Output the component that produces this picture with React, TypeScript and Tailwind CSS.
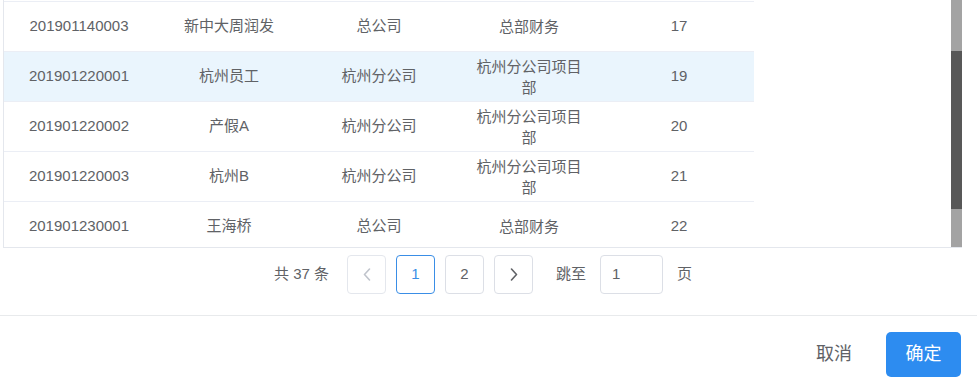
import React from 'react'

type Row = {
  code: string
  name: string
  company: string
  dept: string
  no: number
}

const rows: Row[] = [
  { code: '201901140003', name: '新中大周润发', company: '总公司', dept: '总部财务', no: 17 },
  { code: '201901220001', name: '杭州员工', company: '杭州分公司', dept: '杭州分公司项目部', no: 19 },
  { code: '201901220002', name: '产假A', company: '杭州分公司', dept: '杭州分公司项目部', no: 20 },
  { code: '201901220003', name: '杭州B', company: '杭州分公司', dept: '杭州分公司项目部', no: 21 },
  { code: '201901230001', name: '王海桥', company: '总公司', dept: '总部财务', no: 22 },
]

// index of the highlighted (current) row
const CURRENT = 1

function Chevron({ dir, disabled }: { dir: 'left' | 'right'; disabled?: boolean }) {
  return (
    <svg
      width="8"
      height="13"
      viewBox="0 0 8 13"
      fill="none"
      stroke={disabled ? '#c0c4cc' : '#606266'}
      strokeWidth="1.6"
      strokeLinecap="round"
      strokeLinejoin="round"
    >
      {dir === 'left' ? <path d="M6.5 1 1.5 6.5 6.5 12" /> : <path d="M1.5 1 6.5 6.5 1.5 12" />}
    </svg>
  )
}

function Cell({ children }: { children: React.ReactNode }) {
  return <div className="flex w-[150px] items-center justify-center text-center">{children}</div>
}

export default function App() {
  return (
    <div className="relative h-[388px] w-[977px] overflow-hidden bg-white font-['Liberation_Sans','Noto_Sans_CJK_SC',sans-serif] text-[15px] text-[#606266]">
      {/* ── Table body (scrolled) ───────────────── */}
      <div className="ml-[3px] flex h-[248px] w-[959px] overflow-hidden border-b border-l border-[#e4e7ed]">
        <div className="w-[750px] shrink-0">
          <div className="h-px" />
          <div className="h-px bg-[#ebeef5]" />
          {rows.map((r, i) => (
            <div
              key={r.code}
              className={
                i === CURRENT
                  ? 'flex h-[50px] border-b border-[#ebeef5] bg-[#eaf5fd]'
                  : 'flex h-[50px] border-b border-[#ebeef5]'
              }
            >
              <Cell>{r.code}</Cell>
              <Cell>{r.name}</Cell>
              <Cell>{r.company}</Cell>
              <Cell>
                <div className="w-[110px] leading-[21px]">{r.dept}</div>
              </Cell>
              <Cell>{r.no}</Cell>
            </div>
          ))}
        </div>
        <div className="flex-1" />
        {/* native-looking scrollbar */}
        <div className="flex w-[11px] shrink-0 flex-col bg-[#a3a3a3]">
          <div className="h-[51px]" />
          <div className="h-[158px] bg-[#585858]" />
        </div>
      </div>

      {/* ── Pagination ───────────────── */}
      <div className="mt-[7px] flex h-[39px] items-center pl-[274px]">
        <span className="whitespace-pre">共 37 条</span>
        <button className="ml-[18px] flex h-[39px] w-[39px] items-center justify-center rounded-[4px] border border-[#e4e7ed] bg-white">
          <Chevron dir="left" disabled />
        </button>
        <button className="ml-[10px] flex h-[39px] w-[39px] items-center justify-center rounded-[4px] border border-[#3a8ee6] bg-white text-[#3a8ee6]">
          1
        </button>
        <button className="ml-[10px] flex h-[39px] w-[39px] items-center justify-center rounded-[4px] border border-[#dcdfe6] bg-white">
          2
        </button>
        <button className="ml-[10px] flex h-[39px] w-[39px] items-center justify-center rounded-[4px] border border-[#dcdfe6] bg-white">
          <Chevron dir="right" />
        </button>
        <span className="ml-[23px]">跳至</span>
        <div className="ml-[14px] flex h-[39px] w-[63px] items-center rounded-[4px] border border-[#dcdfe6] pl-[11px]">
          1
        </div>
        <span className="ml-[14px]">页</span>
      </div>

      {/* ── Footer ───────────────── */}
      <div className="mt-[21px] h-px bg-[#e8eaec]" />
      <div className="mt-[16px] flex items-center justify-end pr-[16px]">
        <span className="mr-[34px] text-[18px] text-[#606266]">取消</span>
        <button className="flex h-[45px] w-[75px] items-center justify-center rounded-[5px] bg-[#2d8cf0] text-[18px] text-white">
          确定
        </button>
      </div>
    </div>
  )
}
